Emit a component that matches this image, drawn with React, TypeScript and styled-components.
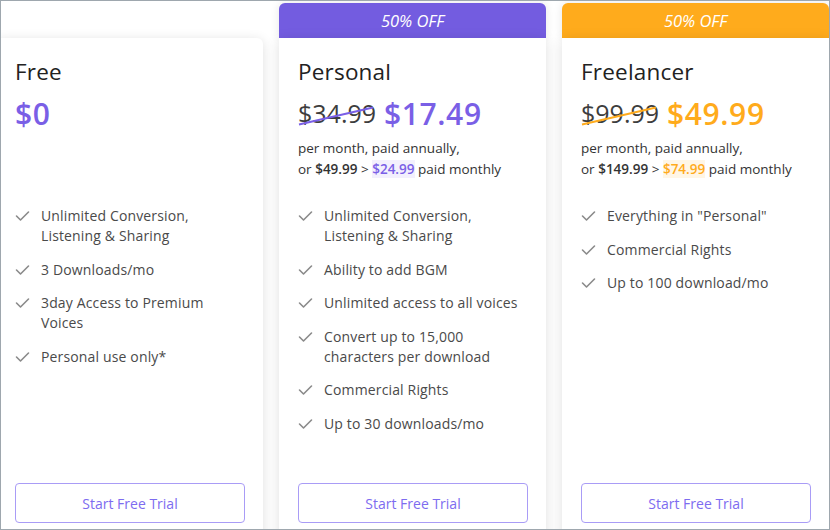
import React from "react";
import styled, { createGlobalStyle, css } from "styled-components";

const Global = createGlobalStyle`
  html, body { margin: 0; padding: 0; background: #ffffff; }
  body { font-family: "Open Sans", "Noto Sans", sans-serif; }
  * { box-sizing: border-box; }
`;

type Tone = "free" | "purple" | "orange";

const toneColor: Record<Tone, string> = {
  free: "#7a5fe6",
  purple: "#7a5fe6",
  orange: "#ffab1c",
};

const headerColor: Record<Tone, string> = {
  free: "transparent",
  purple: "#735ce0",
  orange: "#ffab1c",
};

const Frame = styled.div`
  width: 830px;
  height: 530px;
  border: 1px solid #9ea7ae;
  overflow: hidden;
  background: #ffffff;
`;

const Row = styled.div`
  display: flex;
  gap: 16px;
  margin-left: -5px;
  padding-top: 2px;
`;

const Column = styled.div`
  width: 267px;
  flex: none;
  display: flex;
  flex-direction: column;
`;

const Ribbon = styled.div<{ $tone: Tone }>`
  height: 35px;
  border-radius: 6px 6px 0 0;
  background: ${(p) => headerColor[p.$tone]};
  color: #ffffff;
  font-style: italic;
  font-size: 16.5px;
  display: flex;
  align-items: center;
  justify-content: center;
  ${(p) =>
    p.$tone !== "free" &&
    css`
      box-shadow: 0 0 10px rgba(0, 0, 0, 0.1);
    `}
`;

const Body = styled.div<{ $rounded: boolean }>`
  height: 507px;
  background: #ffffff;
  border-radius: ${(p) => (p.$rounded ? "6px 6px 0 0" : "0")};
  box-shadow: 0 2px 12px rgba(0, 0, 0, 0.13);
  padding: 19px 18px 22px 19px;
  display: flex;
  flex-direction: column;
  position: relative;
`;

const Head = styled.div`
  height: 123px;
`;

const Title = styled.div`
  font-size: 22.5px;
  line-height: 30px;
  color: #222222;
  letter-spacing: 0.2px;
`;

const PriceRow = styled.div`
  margin-top: 6px;
  height: 40px;
  display: flex;
  align-items: center;
  gap: 8px;
`;

const OldPrice = styled.span<{ $tone: Tone }>`
  position: relative;
  font-size: 25px;
  font-weight: 500;
  color: #3d3d3d;
  &::after {
    content: "";
    position: absolute;
    left: 0;
    right: 2px;
    top: 56%;
    height: 2px;
    background: ${(p) => toneColor[p.$tone]};
    transform: rotate(-13deg);
  }
`;

const NewPrice = styled.span<{ $tone: Tone }>`
  font-size: 30px;
  font-weight: 600;
  color: ${(p) => toneColor[p.$tone]};
  letter-spacing: 0.6px;
`;

const SubText = styled.div`
  margin-top: 5px;
  font-size: 13.5px;
  line-height: 21px;
  color: #333333;
`;

const Strong = styled.span`
  font-weight: 600;
`;

const Highlight = styled.span<{ $tone: Tone }>`
  font-weight: 600;
  color: ${(p) => toneColor[p.$tone]};
  background: ${(p) => (p.$tone === "orange" ? "#fff6e6" : "#f3f0fd")};
`;

const Features = styled.ul`
  list-style: none;
  margin: 26px 0 0;
  padding: 0;
  display: flex;
  flex-direction: column;
  gap: 13.6px;
  flex: 1;
`;

const Feature = styled.li`
  display: flex;
  align-items: flex-start;
  gap: 11px;
  font-size: 14px;
  line-height: 20px;
  letter-spacing: 0.15px;
  color: #4a4a4a;
`;

const CheckBox = styled.span`
  flex: none;
  width: 15px;
  height: 20px;
  display: flex;
  align-items: center;
`;

const TrialButton = styled.button`
  height: 40px;
  width: 230px;
  border: 1.5px solid #a99cf6;
  border-radius: 4px;
  background: #ffffff;
  color: #7d6cf0;
  font-family: inherit;
  font-size: 14px;
  cursor: pointer;
`;

const Check = () => (
  <svg width="15" height="12" viewBox="0 0 15 12" fill="none">
    <polyline
      points="1.5,6 5.5,10 13.5,2"
      stroke="#8a8a8a"
      strokeWidth="1.6"
      strokeLinecap="round"
      strokeLinejoin="round"
    />
  </svg>
);

type Plan = {
  tone: Tone;
  name: string;
  oldPrice?: string;
  price: string;
  monthlyOld?: string;
  monthlyNew?: string;
  features: string[][];
};

const plans: Plan[] = [
  {
    tone: "free",
    name: "Free",
    price: "$0",
    features: [
      ["Unlimited Conversion,", "Listening & Sharing"],
      ["3 Downloads/mo"],
      ["3day Access to Premium", "Voices"],
      ["Personal use only*"],
    ],
  },
  {
    tone: "purple",
    name: "Personal",
    oldPrice: "$34.99",
    price: "$17.49",
    monthlyOld: "$49.99",
    monthlyNew: "$24.99",
    features: [
      ["Unlimited Conversion,", "Listening & Sharing"],
      ["Ability to add BGM"],
      ["Unlimited access to all voices"],
      ["Convert up to 15,000", "characters per download"],
      ["Commercial Rights"],
      ["Up to 30 downloads/mo"],
    ],
  },
  {
    tone: "orange",
    name: "Freelancer",
    oldPrice: "$99.99",
    price: "$49.99",
    monthlyOld: "$149.99",
    monthlyNew: "$74.99",
    features: [
      ["Everything in \"Personal\""],
      ["Commercial Rights"],
      ["Up to 100 download/mo"],
    ],
  },
];

export default function App() {
  return (
    <>
      <Global />
      <Frame>
        <Row>
          {plans.map((plan) => (
            <Column key={plan.name}>
              <Ribbon $tone={plan.tone}>{plan.tone !== "free" ? "50% OFF" : null}</Ribbon>
              <Body $rounded={plan.tone === "free"}>
                <Head>
                  <Title>{plan.name}</Title>
                  <PriceRow>
                    {plan.oldPrice && <OldPrice $tone={plan.tone}>{plan.oldPrice}</OldPrice>}
                    <NewPrice $tone={plan.tone}>{plan.price}</NewPrice>
                  </PriceRow>
                  {plan.monthlyOld && (
                    <SubText>
                      per month, paid annually,
                      <br />
                      or <Strong>{plan.monthlyOld}</Strong> &gt;{" "}
                      <Highlight $tone={plan.tone}>{plan.monthlyNew}</Highlight> paid monthly
                    </SubText>
                  )}
                </Head>
                <Features>
                  {plan.features.map((lines) => (
                    <Feature key={lines.join(" ")}>
                      <CheckBox>
                        <Check />
                      </CheckBox>
                      <span>
                        {lines.map((l, i) => (
                          <React.Fragment key={l}>
                            {i > 0 && <br />}
                            {l}
                          </React.Fragment>
                        ))}
                      </span>
                    </Feature>
                  ))}
                </Features>
                <TrialButton>Start Free Trial</TrialButton>
              </Body>
            </Column>
          ))}
        </Row>
      </Frame>
    </>
  );
}
